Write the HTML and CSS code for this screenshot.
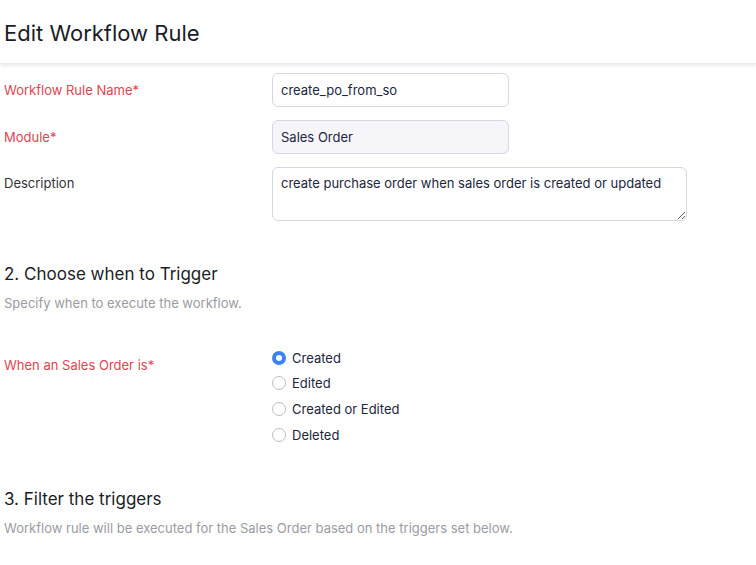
FILE: index.html
```html
<!DOCTYPE html>
<html>
<head>
<meta charset="utf-8">
<link rel="stylesheet" href="styles.css">
</head>
<body>
<header class="page-header">
  <h1 class="page-title">Edit Workflow Rule</h1>
</header>
<main class="content">
  <div class="form-row">
    <label class="field-label required">Workflow Rule Name*</label>
    <input class="text-input" type="text" value="create_po_from_so">
  </div>
  <div class="form-row">
    <label class="field-label required">Module*</label>
    <input class="text-input disabled" type="text" value="Sales Order" readonly>
  </div>
  <div class="form-row top">
    <label class="field-label">Description</label>
    <textarea class="text-area">create purchase order when sales order is created or updated</textarea>
  </div>

  <section class="section">
    <h2 class="section-title">2. Choose when to Trigger</h2>
    <p class="section-sub">Specify when to execute the workflow.</p>
    <div class="form-row radio-row">
      <label class="field-label required trig-label">When an Sales Order is*</label>
      <div class="radio-group">
        <label class="radio-item"><span class="radio checked"></span>Created</label>
        <label class="radio-item"><span class="radio"></span>Edited</label>
        <label class="radio-item"><span class="radio"></span>Created or Edited</label>
        <label class="radio-item"><span class="radio"></span>Deleted</label>
      </div>
    </div>
  </section>

  <section class="section last">
    <h2 class="section-title">3. Filter the triggers</h2>
    <p class="section-sub">Workflow rule will be executed for the Sales Order based on the triggers set below.</p>
  </section>
</main>
</body>
</html>
```
FILE: styles.css
```css
* { box-sizing: border-box; }
html, body { margin: 0; padding: 0; background: #fff; }
body {
  font-family: Inter, "Noto Sans", sans-serif;
  font-size: 13px;
  color: #21263c;
  overflow: hidden;
}
.page-header {
  height: 64px;
  padding: 2px 4px 0;
  display: flex;
  align-items: center;
  box-shadow: 0 2px 3px rgba(0,0,0,0.08);
  border-bottom: 1px solid #ececec;
}
.page-title {
  margin: 0;
  font-size: 22px;
  font-weight: 400;
  color: #1b1d26;
}
.content {
  padding: 9px 4px 0;
}
.form-row {
  display: grid;
  grid-template-columns: 268px auto;
  align-items: center;
  margin-bottom: 13px;
}
.form-row.top { align-items: start; }
.field-label { color: #333; }
.field-label.required { color: #e0454f; }
.form-row.top .field-label { padding-top: 8px; }
.text-input {
  width: 237px;
  height: 34px;
  border: 1px solid #d6d6e4;
  border-radius: 6px;
  padding: 0 8px;
  font: inherit;
  color: #21263c;
  background: #fff;
  outline: none;
}
.text-input.disabled { background: #f6f6fa; }
.text-area {
  width: 415px;
  height: 54px;
  border: 1px solid #d6d6e4;
  border-radius: 6px;
  padding: 7px 8px;
  font: inherit;
  color: #21263c;
  resize: vertical;
  outline: none;
}
.section { margin-top: 41px; }
.section-title {
  margin: 0;
  font-size: 17px;
  font-weight: 400;
  color: #1b1d26;
  line-height: 24px;
}
.section-sub {
  margin: 8px 0 0;
  color: #9a9ba3;
  font-size: 13px;
  line-height: 18px;
}
.radio-row {
  align-items: start;
  margin-top: 33px;
}
.form-row.radio-row .trig-label { padding-top: 12px; }
.radio-group { display: flex; flex-direction: column; }
.radio-item {
  display: flex;
  align-items: center;
  height: 25.6px;
  color: #21263c;
}
.radio {
  width: 14px;
  height: 14px;
  border: 1px solid #bdbdc4;
  border-radius: 50%;
  margin-right: 6px;
  background: #fff;
}
.radio.checked {
  border: 4px solid #3b82f6;
}
.section.last { margin-top: 40px; }
```
